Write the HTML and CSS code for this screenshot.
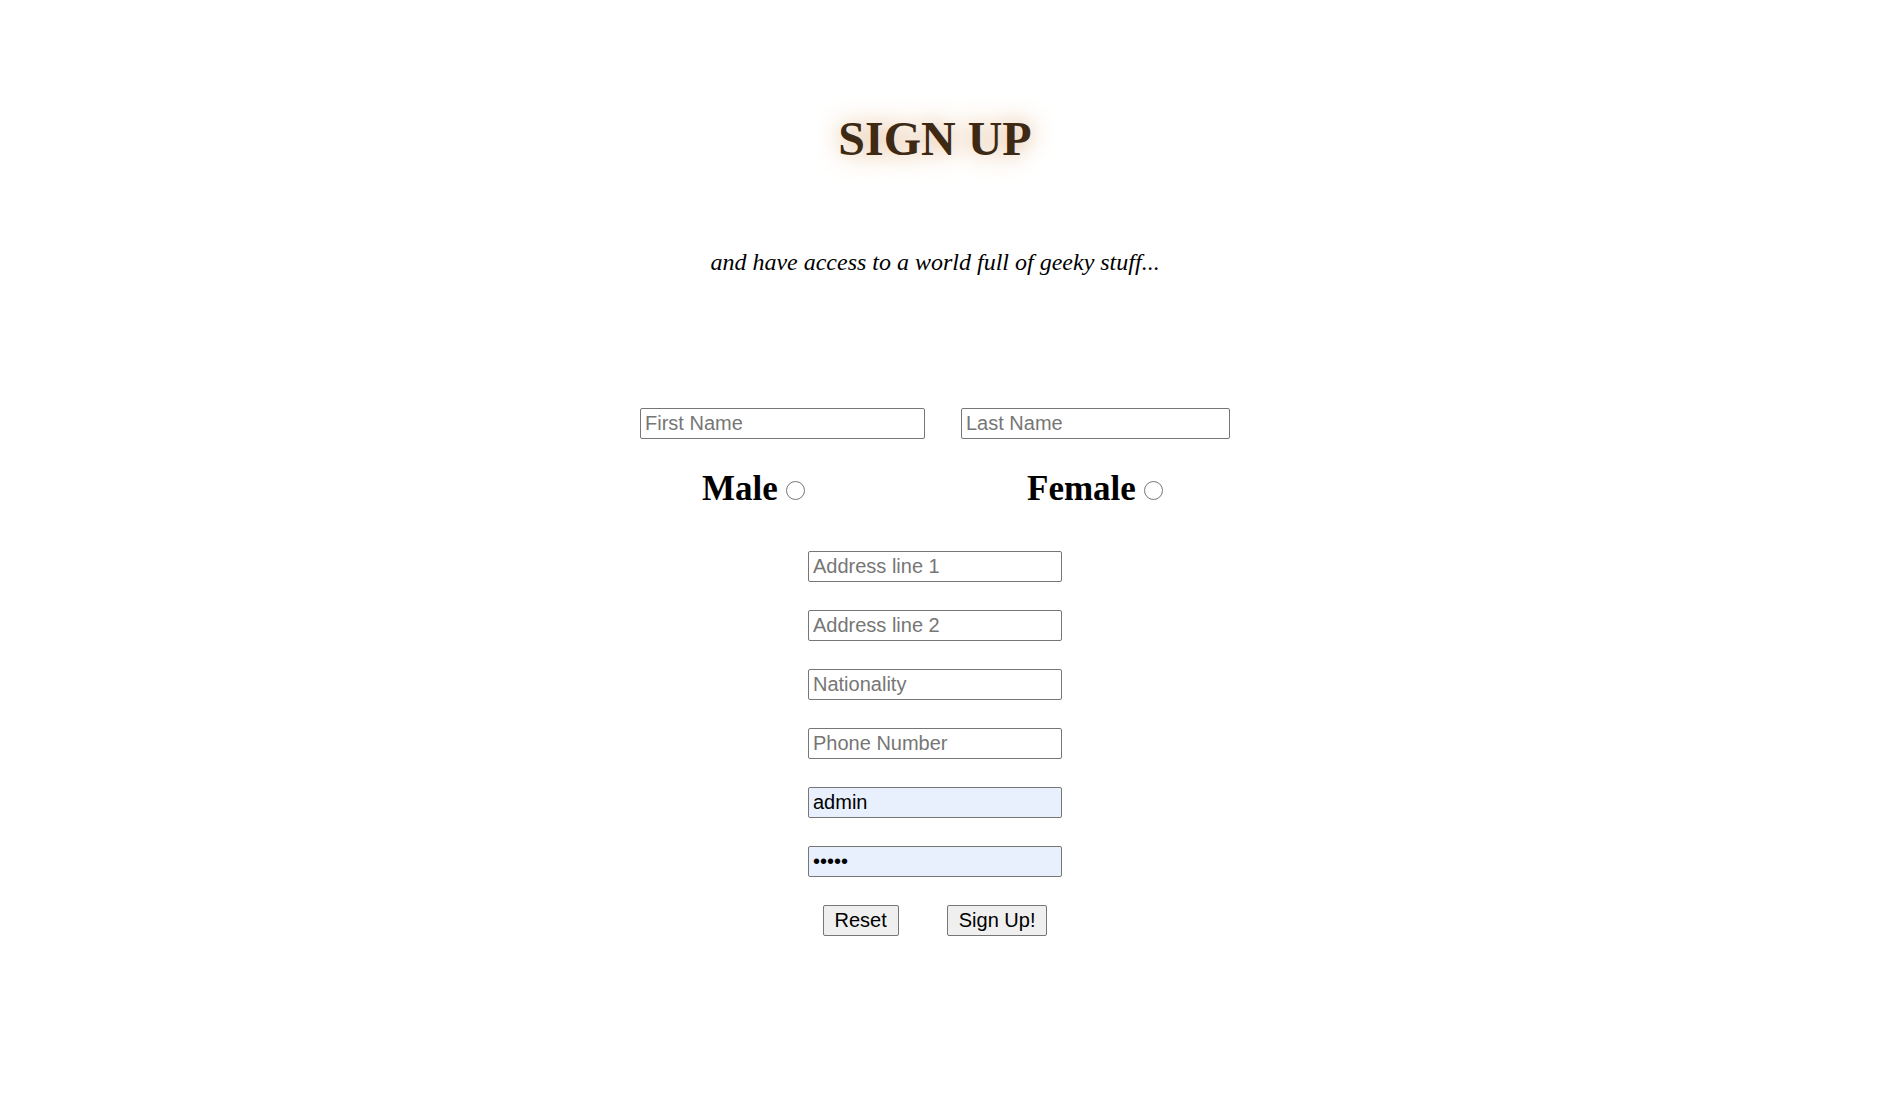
FILE: index.html
```html
<!DOCTYPE html>
<html lang="en">
<head>
<meta charset="utf-8">
<title>Sign Up</title>
<link rel="stylesheet" href="styles.css">
</head>
<body>
<main class="page">
  <h1 class="title">SIGN UP</h1>
  <p class="tagline">and have access to a world full of geeky stuff...</p>
  <form class="signup">
    <div class="name-row">
      <input class="field field-first" type="text" placeholder="First Name">
      <input class="field field-last" type="text" placeholder="Last Name">
    </div>
    <div class="gender-row">
      <label class="gender gender-male">Male<input class="radio" type="radio" name="gender"></label>
      <label class="gender gender-female">Female<input class="radio" type="radio" name="gender"></label>
    </div>
    <div class="stack">
      <input class="field field-std" type="text" placeholder="Address line 1">
      <input class="field field-std" type="text" placeholder="Address line 2">
      <input class="field field-std" type="text" placeholder="Nationality">
      <input class="field field-std" type="text" placeholder="Phone Number">
      <input class="field field-std field-filled" type="text" value="admin">
      <input class="field field-std field-filled" type="password" value="admin">
      <div class="buttons">
        <button class="btn" type="reset">Reset</button>
        <button class="btn" type="submit">Sign Up!</button>
      </div>
    </div>
  </form>
</main>
</body>
</html>
```

FILE: styles.css
```css
html, body {
  margin: 0;
  padding: 0;
  background: #ffffff;
}

body {
  font-family: "Liberation Serif", "Times New Roman", serif;
  color: #000;
}

.page {
  width: 1870px;
  padding-top: 111px;
  text-align: center;
}

.title {
  margin: 0;
  font-family: "Liberation Serif", "Times New Roman", serif;
  font-weight: bold;
  font-size: 48px;
  line-height: 56px;
  color: #3e2914;
  text-shadow: 0 0 24px #d9a46f;
}

.tagline {
  margin: 81px 0 0;
  font-style: italic;
  font-size: 24px;
  line-height: 28px;
}

.signup {
  margin-top: 132px;
}

.name-row {
  display: flex;
  justify-content: center;
  gap: 36px;
}

.field {
  box-sizing: border-box;
  height: 31px;
  margin: 0;
  padding: 0 4px;
  border: 1px solid #767676;
  border-radius: 2px;
  background: #ffffff;
  font-family: "Liberation Sans", Arial, sans-serif;
  font-size: 20px;
  color: #000;
  outline: none;
}

.field::placeholder {
  color: #767676;
  opacity: 1;
}

.field-first { width: 285px; }
.field-last { width: 269px; }
.field-std { width: 254px; }

.field-filled {
  background: #e8f0fe;
}

.gender-row {
  display: grid;
  grid-template-columns: 285px 269px;
  column-gap: 36px;
  justify-content: center;
  margin-top: 30px;
  text-align: left;
}

.gender {
  font-weight: bold;
  font-size: 35px;
  line-height: 40px;
  white-space: nowrap;
}

.gender-male { padding-left: 62px; }
.gender-female { padding-left: 66px; }

.radio {
  -webkit-appearance: none;
  appearance: none;
  box-sizing: border-box;
  width: 19px;
  height: 19px;
  margin: 0 0 0 8px;
  border: 1px solid #767676;
  border-radius: 50%;
  background: #fff;
  vertical-align: baseline;
}

.stack {
  display: flex;
  flex-direction: column;
  align-items: center;
  gap: 28px;
  margin-top: 42px;
}

.buttons {
  display: flex;
  justify-content: center;
  gap: 48px;
}

.btn {
  box-sizing: border-box;
  height: 31px;
  margin: 0;
  padding: 0 11px;
  border: 1px solid #767676;
  border-radius: 2px;
  background: #efefef;
  font-family: "Liberation Sans", Arial, sans-serif;
  font-size: 20px;
  color: #000;
}
```
